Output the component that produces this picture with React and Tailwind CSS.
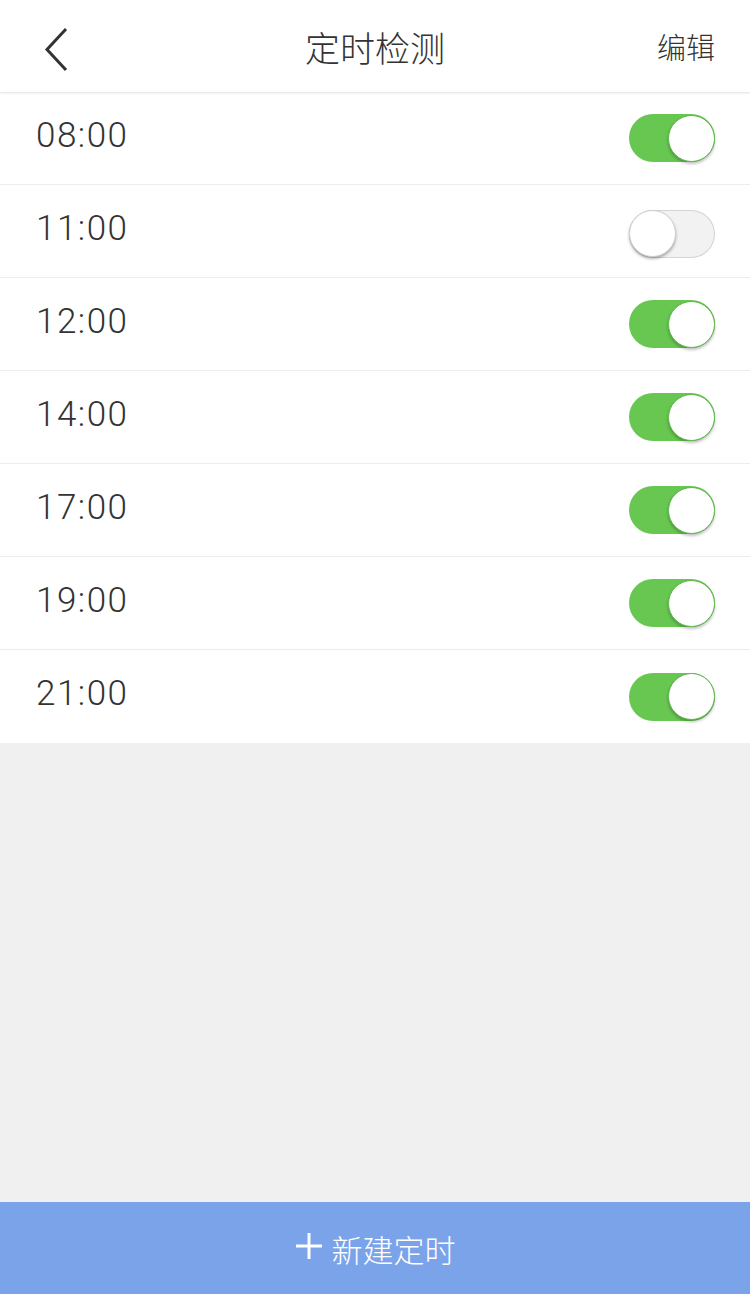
import React from "react";

const times = [
  ["08:00", true],
  ["11:00", false],
  ["12:00", true],
  ["14:00", true],
  ["17:00", true],
  ["19:00", true],
  ["21:00", true],
];

function Toggle({ on }) {
  if (on) {
    return (
      <div className="w-[86px] h-[48px] rounded-full bg-[#67c751] flex items-center justify-end">
        <div className="w-[47px] h-[47px] rounded-full bg-white border border-[#5cb848] shadow-[0_2px_3px_rgba(0,0,0,0.25)]" />
      </div>
    );
  }
  return (
    <div className="w-[86px] h-[48px] mt-[5px] rounded-full bg-[#f2f2f2] shadow-[inset_0_0_0_1px_#d4d4d4] flex items-center justify-start">
      <div className="w-[47px] h-[47px] rounded-full bg-white border border-[#cfcfcf] shadow-[0_2px_3px_rgba(0,0,0,0.3)]" />
    </div>
  );
}

export default function App() {
  const cjk = { fontFamily: '"Noto Sans CJK SC", "Noto Sans", sans-serif' };
  return (
    <div className="w-[750px] h-[1294px] bg-[#f0f0f0] flex flex-col" style={cjk}>
      <div className="h-[92px] bg-white flex items-center px-[35px] shadow-[0_1px_2px_rgba(0,0,0,0.12)] relative z-10 shrink-0">
        <div className="w-[100px] flex items-center">
          <svg width="40" height="50" viewBox="0 0 40 50" className="ml-[4px] mt-[8px]">
            <path d="M27 4 L8 24.5 L27 45" fill="none" stroke="#333" strokeWidth="3" strokeLinecap="butt" />
          </svg>
        </div>
        <div className="flex-1 text-center text-[35px] text-[#333] font-light leading-none">定时检测</div>
        <div className="w-[100px] text-right text-[29px] text-[#333] font-light leading-none">编辑</div>
      </div>
      <div className="bg-white shrink-0">
        {times.map(([t, on], i) => (
          <div
            key={t}
            className={`h-[93px] flex items-center justify-between pl-[36px] pr-[35px] ${i < times.length - 1 ? "border-b border-[#ececec]" : ""}`}
          >
            <div
              className="text-[35px] text-[#333] font-light leading-none tracking-[1.5px] -mt-[6px]"
              style={{ fontFamily: 'Roboto, "Noto Sans", sans-serif' }}
            >
              {t}
            </div>
            <Toggle on={on} />
          </div>
        ))}
      </div>
      <div className="flex-1" />
      <div className="h-[92px] bg-[#7ba3e9] flex items-center justify-center shrink-0">
        <svg width="28" height="28" viewBox="0 0 28 28" className="mr-[9px] -mt-[4px]">
          <path d="M14 1 V27 M1 14 H27" stroke="#fff" strokeWidth="3" />
        </svg>
        <span className="text-[31px] text-white font-light leading-none">新建定时</span>
      </div>
    </div>
  );
}
